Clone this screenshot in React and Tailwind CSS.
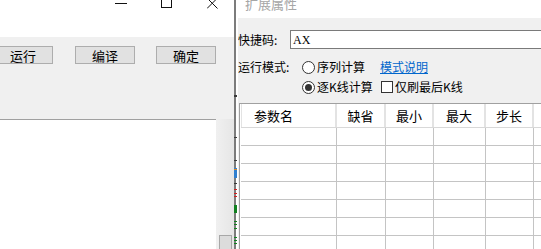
import React from "react";

const font = { fontFamily: '"Noto Sans CJK SC", "Microsoft YaHei", sans-serif' };

const cols = [96, 49, 48, 52, 48, 70];
const headers = ["参数名", "缺省", "最小", "最大", "步长", ""];

const ticks = [
  { y: 95, h: 2, c: "#3a3a3a" },
  { y: 137, h: 1, c: "#3a3a3a" },
  { y: 160, h: 1, c: "#3a3a3a" },
  { y: 168, h: 10, c: "#2f7fd0" },
  { y: 169, h: 1, c: "#e08a20" },
  { y: 183, h: 1, c: "#3a3a3a" },
  { y: 189, h: 1, c: "#d02020" },
  { y: 193, h: 1, c: "#d02020" },
  { y: 196, h: 1, c: "#d02020" },
  { y: 205, h: 8, c: "#108020" },
  { y: 221, h: 1, c: "#108020" },
  { y: 224, h: 1, c: "#108020" },
  { y: 228, h: 1, c: "#108020" },
  { y: 237, h: 1, c: "#108020" },
  { y: 240, h: 1, c: "#108020" },
  { y: 243, h: 1, c: "#108020" },
];

const Radio = ({ checked }) => (
  <span className="w-[13px] h-[13px] rounded-full border border-[#333] bg-white flex items-center justify-center">
    {checked && <span className="w-[7px] h-[7px] rounded-full bg-[#333]" />}
  </span>
);

const LeftWindow = () => (
  <div className="w-[234px] h-full flex flex-col">
    <div className="h-[37px] bg-white flex items-start">
      <svg width="13" height="8" className="ml-[115px]">
        <line x1="0" y1="3.5" x2="12" y2="3.5" stroke="#111" strokeWidth="1" />
      </svg>
      <svg width="11" height="8" className="ml-[33px]">
        <rect x="0.5" y="-3" width="10" height="10.5" fill="none" stroke="#111" strokeWidth="1" />
      </svg>
      <svg width="11" height="9" className="ml-[35px]">
        <path d="M0 -2 L10.5 8.5 M10.5 -2 L0 8.5" stroke="#111" strokeWidth="1" />
      </svg>
    </div>
    <div className="flex-1 bg-[#f0f0f0] flex flex-col">
      <div className="h-[82px] pt-[9px] flex items-start text-[13px] text-black">
        <button className="ml-[-7px] w-[60px] h-[18px] bg-[#e1e1e1] border border-[#adadad] leading-none">运行</button>
        <button className="ml-[22px] w-[60px] h-[18px] bg-[#e1e1e1] border border-[#adadad] leading-none">编译</button>
        <button className="ml-[21px] w-[60px] h-[18px] bg-[#e1e1e1] border border-[#adadad] leading-none">确定</button>
      </div>
      <div className="flex-1 flex">
        <div className="w-[216px] bg-white border-t border-[#a0a0a0]" />
        <div className="flex-1 flex flex-col justify-end bg-gradient-to-r from-[#f0f0f0] to-[#e6e6e6]">
          <div className="ml-[3px] w-[13px] h-[14px] bg-[#dcdcdc] border border-[#a8a8a8] border-b-0" />
        </div>
      </div>
    </div>
  </div>
);

const Divider = () => (
  <svg width="3" height="249" className="shrink-0">
    <rect x="0" y="0" width="2" height="249" fill="#7c7c7c" />
    {ticks.map((t, i) => (
      <rect key={i} x="0" y={t.y} width="3" height={t.h} fill={t.c} />
    ))}
  </svg>
);

const Dialog = () => (
  <div className="flex-1 h-full flex flex-col overflow-hidden text-[12px] text-black">
    <div className="h-[18px] bg-white shrink-0 overflow-hidden">
      <div className="ml-[7px] mt-[-6px] text-[13px] text-[#a6a6a6]">扩展属性</div>
    </div>
    <div className="flex-1 bg-[#f0f0f0] flex flex-col">
      <div className="mt-[12px] h-[19px] flex items-center">
        <span className="w-[52px] whitespace-nowrap">快捷码:</span>
        <div className="flex-1 h-[19px] bg-white border border-[#7a7a7a] border-r-0 flex items-center pl-[2px]">
          <span className="text-[12px]" style={{ fontFamily: '"Liberation Serif", serif' }}>AX</span>
        </div>
      </div>
      <div className="mt-[11px] h-[14px] flex items-center">
        <span className="w-[64px] whitespace-nowrap">运行模式:</span>
        <Radio />
        <span className="ml-[2px] w-[63px]">序列计算</span>
        <span className="text-[#0066cc] underline">模式说明</span>
      </div>
      <div className="mt-[6px] h-[14px] flex items-center">
        <span className="w-[64px]" />
        <Radio checked />
        <span className="ml-[2px] w-[64px] whitespace-nowrap">逐K线计算</span>
        <span className="w-[12px] h-[12px] border border-[#333] bg-white" />
        <span className="ml-[2px] whitespace-nowrap">仅刷最后K线</span>
      </div>
      <div className="mt-[9px] ml-px flex-1 bg-white border-l border-t border-[#a0a0a0] pl-px overflow-hidden">
        <div className="flex h-[24px] border-b border-[#d8d8d8] bg-white">
          {cols.map((w, i) => (
            <div
              key={i}
              className={`shrink-0 h-full flex items-center border-r-2 border-[#e3e3e3] text-[13px] ${i === 0 ? "pl-[12px] border-l border-l-[#e3e3e3]" : "justify-center"}`}
              style={{ width: w }}
            >
              {headers[i]}
            </div>
          ))}
        </div>
        {Array.from({ length: 7 }).map((_, r) => (
          <div key={r} className="flex h-[18px] border-b border-[#c4c4c4]">
            {cols.map((w, i) => (
              <div key={i} className="shrink-0 h-full border-r border-[#c4c4c4]" style={{ width: w }} />
            ))}
          </div>
        ))}
      </div>
    </div>
  </div>
);

export default function App() {
  return (
    <div className="w-[541px] h-[249px] flex overflow-hidden bg-white" style={font}>
      <LeftWindow />
      <Divider />
      <div className="w-px h-full bg-white shrink-0" />
      <Dialog />
    </div>
  );
}
